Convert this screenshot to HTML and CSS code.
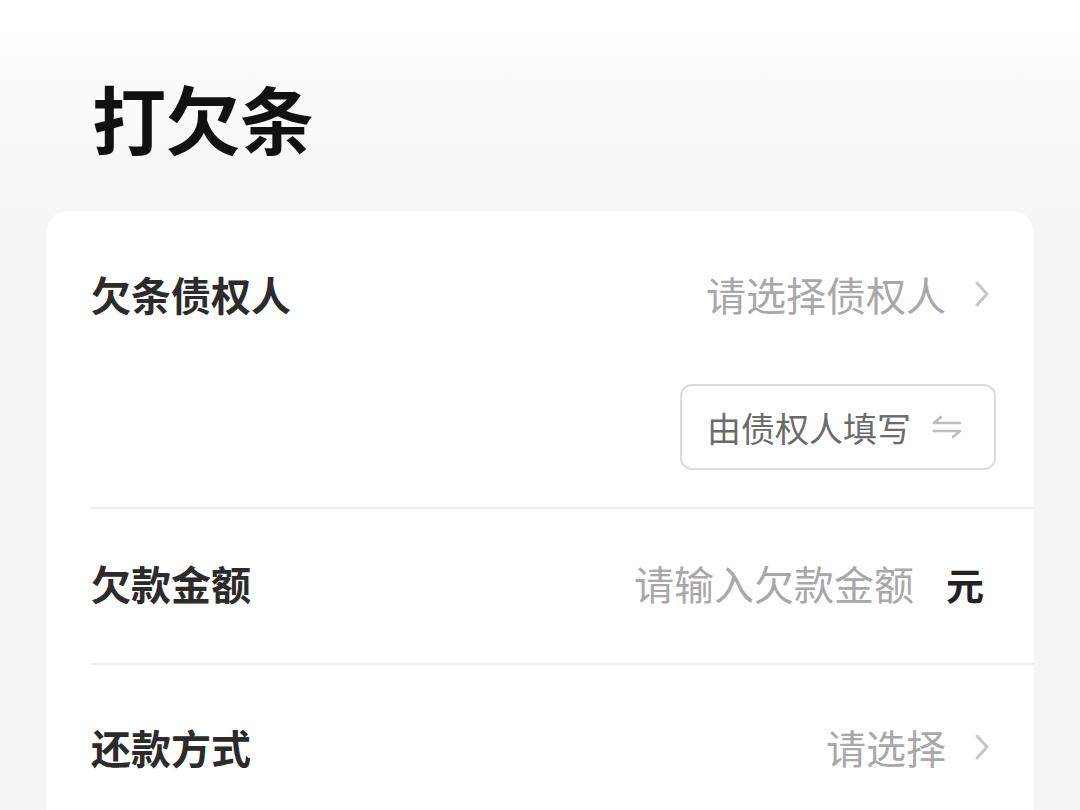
FILE: index.html
```html
<!DOCTYPE html>
<html lang="zh-CN">
<head>
  <meta charset="UTF-8">
  <meta name="viewport" content="width=device-width, initial-scale=1.0">
  <title>打欠条</title>
  <link rel="stylesheet" href="styles.css">
</head>
<body>

  <!-- 标题 -->
  <h1 class="page-title">打欠条</h1>

  <!-- 表单卡片 -->
  <div class="card">

    <!-- 债权人 -->
    <div class="row row-creditor">
      <div class="line">
        <span class="label">欠条债权人</span>
        <span class="value">
          <span class="placeholder">请选择债权人</span>
          <svg class="chevron" viewBox="0 0 16 28" width="16" height="28">
            <path d="M3 3 L13 14 L3 25" fill="none" stroke="#c6c6c6" stroke-width="3" stroke-linecap="round" stroke-linejoin="round"/>
          </svg>
        </span>
      </div>
      <div class="switch-wrap">
        <button class="switch-button">
          由债权人填写
          <svg class="swap" viewBox="0 0 30 26" width="30" height="26">
            <path d="M2 9 H28 M2 9 L9 3 M2 17 H28 M28 17 L21 23" fill="none" stroke="#bdbdbd" stroke-width="2.6" stroke-linecap="round" stroke-linejoin="round"/>
          </svg>
        </button>
      </div>
    </div>

    <!-- 欠款金额 -->
    <div class="row row-amount">
      <div class="line">
        <span class="label">欠款金额</span>
        <span class="value">
          <span class="placeholder">请输入欠款金额</span>
          <span class="unit">元</span>
        </span>
      </div>
    </div>

    <!-- 还款方式 -->
    <div class="row row-repay">
      <div class="line">
        <span class="label">还款方式</span>
        <span class="value">
          <span class="placeholder">请选择</span>
          <svg class="chevron" viewBox="0 0 16 28" width="16" height="28">
            <path d="M3 3 L13 14 L3 25" fill="none" stroke="#c6c6c6" stroke-width="3" stroke-linecap="round" stroke-linejoin="round"/>
          </svg>
        </span>
      </div>
    </div>

  </div>

</body>
</html>
```

FILE: styles.css
```css
* {
  margin: 0;
  padding: 0;
  box-sizing: border-box;
}

body {
  font-family: "Noto Sans CJK SC", "Noto Sans", sans-serif;
  height: 100vh;
  overflow: hidden;
  background: linear-gradient(180deg, #ffffff 0px, #f4f5f7 220px, #f3f4f6 100%);
}

/* 标题 */
.page-title {
  font-size: 74px;
  font-weight: 700;
  color: #111;
  line-height: 74px;
  padding: 80px 0 0 92px;
  height: 211px;
}

/* 卡片 */
.card {
  margin: 0 46px;
  background-color: #fff;
  border-radius: 22px;
  padding-left: 45px;
  height: 640px;
}

.row {
  border-bottom: 2px solid #eeeeee;
  padding-right: 44px;
}

.line {
  display: flex;
  align-items: center;
  justify-content: space-between;
  height: 56px;
}

.label {
  font-size: 40px;
  font-weight: 700;
  color: #2b2b2b;
}

.value {
  display: flex;
  align-items: center;
}

.placeholder {
  font-size: 40px;
  color: #a8a8a8;
}

.chevron {
  margin-left: 28px;
}

.unit {
  font-size: 38px;
  font-weight: 700;
  color: #222;
  margin-left: 32px;
  margin-right: 6px;
}

/* 债权人行 */
.row-creditor {
  padding-top: 55px;
  padding-bottom: 37px;
}

.switch-wrap {
  display: flex;
  justify-content: flex-end;
  margin-top: 62px;
  margin-right: -6px;
}

.switch-button {
  display: flex;
  align-items: center;
  height: 86px;
  width: 316px;
  padding: 0 32px 0 25px;
  justify-content: space-between;
  background-color: #fff;
  border: 2px solid #dcdcdc;
  border-radius: 12px;
  font-family: inherit;
  font-size: 34px;
  color: #6b6b6b;
}

/* 金额行 */
.row-amount {
  height: 156px;
  padding-top: 46px;
}

/* 还款方式行 */
.row-repay {
  border-bottom: none;
  padding-top: 54px;
}
```
